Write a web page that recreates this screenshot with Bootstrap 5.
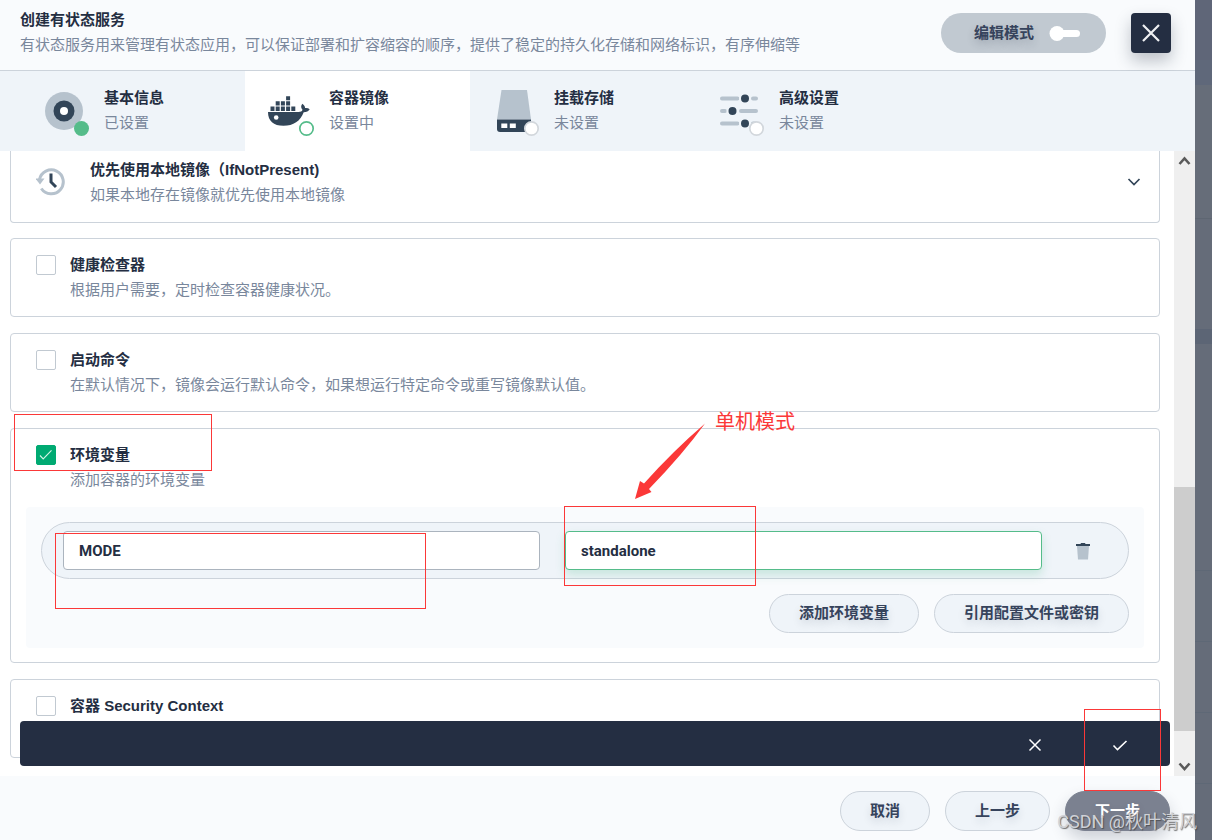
<!DOCTYPE html>
<html lang="zh-CN">
<head>
<meta charset="utf-8">
<meta name="viewport" content="width=device-width, initial-scale=1">
<title>创建有状态服务</title>
<link href="https://cdn.jsdelivr.net/npm/bootstrap@5.3.0/dist/css/bootstrap.min.css" rel="stylesheet">
<style>
:root { --ink:#242e42; --ink2:#36435c; --muted:#79879c; --line:#ccd3db; --pale:#eff4f9; --faint:#f9fbfd; --green:#55bc8a; --mark:#fb3838; }
body { font-family:Roboto,"Noto Sans CJK SC",sans-serif; font-size:15px; line-height:25px; color:var(--ink); background:#656c79; }
.backdrop { padding-right:17px; background:linear-gradient(#5f6678 0 60px,#5f687a 60px 85px,#666d79 85px 218px,#5e6672 218px 219px,#656c79 219px 329px,#5c6575 329px 344px,#656c79 344px 570px,#5e6876 570px 571px,#646c79 571px 641px,#5e6876 641px 642px,#656c79 642px 712px,#5e6876 712px 713px,#656c79 713px 783px,#5e6876 783px 784px,#656c79 784px); }
.drawer { background:#fff; }
.top-bar { background:var(--faint); border-bottom:1px solid var(--line); padding:8px 24px 12px 20px; }
.top-actions { gap:25px; padding-top:5px; }
.fw-title { font-weight:700; }
.panel .fw-title { font-family:"Liberation Sans","Noto Sans CJK SC",sans-serif; }
.desc { color:var(--muted); }
.mode-btn { height:40px; padding:0 26px 0 33px; gap:15px; border:0; border-radius:20px; background:#c1c9d1; color:var(--ink2); font-weight:700; text-shadow:0 4px 8px rgba(36,46,66,.2); }
.close-btn { width:40px; height:40px; border:0; border-radius:4px; background:var(--ink); box-shadow:0 8px 16px rgba(36,46,66,.28); }
.steps { background:var(--pale); padding-left:20px; }
.step-tab { width:225px; height:80px; padding-left:20px; gap:16px; color:inherit; text-decoration:none; }
.step-tab.current { background:#fff; }
.step-icon { width:48px; height:48px; overflow:visible; }
.panel { border:1px solid var(--line); border-radius:4px; background:#fff; padding:13px 15px 14px 25px; }
.panel.cut { border-top:0; border-radius:0 0 4px 4px; padding:6px 17px 15px 25px; }
.panel .desc { padding-top:1px; margin-bottom:-1px; }
.panel-list { padding:0 14px 18px 10px; gap:16px; }
.panel.cut + .panel { margin-top:-1px; }
.tick { appearance:none; width:20px; height:20px; margin:3px 14px 0 0; border:1px solid #c1c9d1; border-radius:2px; background:#fff; flex:none; }
.tick:checked { border-color:#00aa72; background:#00aa72 url("data:image/svg+xml,%3Csvg xmlns='http://www.w3.org/2000/svg' viewBox='0 0 18 18'%3E%3Cpath d='M3 9.5l3.2 3.4L14.5 4.4' fill='none' stroke='%23d4f4e6' stroke-width='1.1'/%3E%3C/svg%3E"); }
.env-area { margin:15px 0 0 -10px; padding:15px; border-radius:4px; background:var(--faint); }
.env-row { padding:8px 0 8px 21px; border:1px solid var(--line); border-radius:29px; background:var(--pale); }
.env-fields { gap:25px; }
.env-actions { gap:15px; margin-top:15px; }
.env-input { width:100%; height:39px; padding:0 15px; border:1px solid #abb4be; border-radius:4px; background:#fff; color:var(--ink); font-weight:700; outline:0; display:block; }
.env-input.active { border-color:var(--green); box-shadow:0 5px 10px rgba(85,188,138,.25); }
.bin { width:86px; border:0; background:none; padding:0 4px 0 0; }
.pill { height:40px; padding:0 29px; border:1px solid var(--line); border-radius:20px; background:var(--pale); color:var(--ink2); font-weight:700; text-shadow:0 4px 8px rgba(36,46,66,.15); }
.env-area .pill { height:39px; }
.pill.next { background:#7b8190; border-color:#7b8190; color:#fff; box-shadow:0 8px 16px rgba(36,46,66,.2); }
.rail { width:21px; background:#efefef; }
.rail-thumb { background:#cdcdcd; height:244px; }
.confirm-bar { left:20px; right:25px; bottom:10px; height:45px; border-radius:4px; background:var(--ink); padding:2px 8px 0 0; z-index:2; }
.confirm-bar > button { width:85px; border:0; background:none; padding:0; }
.bottom-bar { background:var(--faint); padding:15px 25px 9px; gap:15px; }
.mark-box { position:absolute; border:1px solid var(--mark); pointer-events:none; z-index:3; }
.mark-check { left:3px; top:-15px; width:198px; height:57px; }
.mark-key { left:-8px; top:2px; width:371px; height:76px; }
.mark-value { left:-1px; top:-25px; width:192px; height:80px; }
.mark-confirm { right:9px; top:-12px; width:77px; height:82px; }
.mark-arrow { position:absolute; left:70px; top:-108px; z-index:3; }
.mark-note { position:absolute; left:150px; top:-121px; font-size:20px; line-height:24px; color:var(--mark); white-space:nowrap; }
.watermark { position:absolute; right:-2px; bottom:6px; font-size:18px; line-height:25px; color:#cfd1d6; text-shadow:1px 1px 1px rgba(60,60,60,.7); white-space:nowrap; pointer-events:none; z-index:3; }
</style>
</head>
<body>
<div class="backdrop min-vh-100 d-flex">
<div class="drawer flex-grow-1 d-flex flex-column">

<header class="top-bar d-flex align-items-start">
  <div class="flex-grow-1">
    <div class="fw-title">创建有状态服务</div>
    <div class="desc">有状态服务用来管理有状态应用，可以保证部署和扩容缩容的顺序，提供了稳定的持久化存储和网络标识，有序伸缩等</div>
  </div>
  <div class="top-actions d-flex flex-shrink-0">
    <button type="button" class="mode-btn d-flex align-items-center">编辑模式
      <svg width="31" height="16" viewBox="0 0 31 16"><rect x="7" y="5" width="24" height="7" rx="3.5" fill="#fff"/><circle cx="8" cy="8.5" r="7.5" fill="#fff"/></svg>
    </button>
    <button type="button" class="close-btn d-flex align-items-center justify-content-center" aria-label="关闭">
      <svg width="20" height="20" viewBox="0 0 20 20"><path d="M2 2l16 16M18 2L2 18" stroke="#f0f1f3" stroke-width="2.2"/></svg>
    </button>
  </div>
</header>

<nav class="steps d-flex">
  <a href="#" class="step-tab d-flex align-items-center">
    <svg class="step-icon" viewBox="0 0 48 48"><circle cx="24" cy="24" r="19" fill="#b6c2cd"/><circle cx="24" cy="24" r="10.5" fill="#324558"/><circle cx="24" cy="24" r="4" fill="#fff"/><circle cx="41.500" cy="41.500" r="7.500" fill="#55bc8a"/></svg>
    <span><span class="fw-title d-block">基本信息</span><span class="desc d-block">已设置</span></span>
  </a>
  <a href="#" class="step-tab current d-flex align-items-center">
    <svg class="step-icon" viewBox="0 0 48 48"><path fill="#324558" d="M3 25h30.500c2.200 0 3.700-1 4-2.300-1.800-1.700-1.700-4.200-.2-6 1.800 1.200 2.700 2.600 2.800 4.300 1.600-.3 3.300.1 4.600 1.200-1.100 2-3.200 3-6 3-3.200 8.800-10.300 13.600-20.200 13.600C8.500 38.800 3 34 3 25z"/><path fill="#324558" d="M5.500 19.500h4v4.500h-4zM10.700 19.500h4v4.500h-4zM15.900 19.500h4v4.500h-4zM21.100 19.500h4v4.500h-4zM26.300 19.500h4v4.500h-4zM10.700 14.300h4v4.300h-4zM15.900 14.300h4v4.300h-4zM21.100 14.300h4v4.300h-4zM21.100 9.200h4v4h-4z"/><circle cx="11.200" cy="30.500" r="2.300" fill="#fff"/><circle cx="41.500" cy="41.500" r="6.700" fill="#fff" stroke="#55bc8a" stroke-width="1.700"/></svg>
    <span><span class="fw-title d-block">容器镜像</span><span class="desc d-block">设置中</span></span>
  </a>
  <a href="#" class="step-tab d-flex align-items-center">
    <svg class="step-icon" viewBox="0 0 48 48"><path fill="#b6c2cd" d="M11.500 3h25.500l4 29.500H7z"/><path fill="#324558" d="M7 32.500h34V42a3 3 0 0 1-3 3H10a3 3 0 0 1-3-3z"/><path fill="#fff" d="M11.300 36.500h6v4.500h-6zM19.800 36.500h6v4.500h-6z"/><circle cx="41.500" cy="41.500" r="6.700" fill="#fff" stroke="#d2d7dc" stroke-width="1.700"/></svg>
    <span><span class="fw-title d-block">挂载存储</span><span class="desc d-block">未设置</span></span>
  </a>
  <a href="#" class="step-tab d-flex align-items-center">
    <svg class="step-icon" viewBox="0 0 48 48"><path d="M7 11.500h15.500M38 11.500h3M7 24h3M26 24h15M7 36.500h15.500M38 36.500h3" stroke="#b6c2cd" stroke-width="4" stroke-linecap="round"/><g fill="#324558" stroke="#eff4f9" stroke-width="2"><circle cx="30" cy="11.500" r="5"/><circle cx="17.500" cy="24" r="5"/><circle cx="30" cy="36.500" r="5"/></g><circle cx="41.500" cy="41.500" r="6.700" fill="#fff" stroke="#d2d7dc" stroke-width="1.700"/></svg>
    <span><span class="fw-title d-block">高级设置</span><span class="desc d-block">未设置</span></span>
  </a>
</nav>

<main class="d-flex flex-grow-1 position-relative">
  <div class="panel-list flex-grow-1 d-flex flex-column">
    <section class="panel cut d-flex align-items-center">
      <svg width="30" height="30" viewBox="0 0 30 30" class="flex-shrink-0"><path d="M3.500 12.500A12 12 0 1 1 5.300 21.500" fill="none" stroke="#b6c2cd" stroke-width="3"/><path d="M-.5 11.500h9l-4.500 6z" fill="#b6c2cd"/><path d="M15 6.500V15l5 5" fill="none" stroke="#324558" stroke-width="3"/></svg>
      <div class="flex-grow-1 ms-4">
        <div class="fw-title">优先使用本地镜像（IfNotPresent)</div>
        <div class="desc">如果本地存在镜像就优先使用本地镜像</div>
      </div>
      <svg width="16" height="16" viewBox="0 0 16 16"><path d="M2.500 5L8 10.500 13.500 5" fill="none" stroke="#324558" stroke-width="1.700"/></svg>
    </section>

    <section class="panel d-flex">
      <input class="tick" type="checkbox" id="probe">
      <label for="probe"><span class="fw-title d-block">健康检查器</span><span class="desc d-block">根据用户需要，定时检查容器健康状况。</span></label>
    </section>

    <section class="panel d-flex">
      <input class="tick" type="checkbox" id="command">
      <label for="command"><span class="fw-title d-block">启动命令</span><span class="desc d-block">在默认情况下，镜像会运行默认命令，如果想运行特定命令或重写镜像默认值。</span></label>
    </section>

    <section class="panel position-relative">
      <div class="d-flex">
        <input class="tick" type="checkbox" id="env" checked>
        <label for="env"><span class="fw-title d-block">环境变量</span><span class="desc d-block">添加容器的环境变量</span></label>
      </div>
      <div class="mark-box mark-check"></div>
      <div class="env-area">
        <div class="env-row d-flex">
          <div class="env-fields d-flex flex-grow-1">
            <div class="w-50 position-relative">
              <input class="env-input" type="text" value="MODE" aria-label="键">
              <div class="mark-box mark-key"></div>
            </div>
            <div class="w-50 position-relative">
              <input class="env-input active" type="text" value="standalone" aria-label="值">
              <div class="mark-box mark-value"></div>
              <svg class="mark-arrow" width="71" height="77" viewBox="0 0 71 77"><path d="M70 .5Q48 31 14 66l2.500 3L0 76 5 58l4 2.500Q38 28 70 .5z" fill="#fb3838"/></svg>
              <div class="mark-note">单机模式</div>
            </div>
          </div>
          <button type="button" class="bin d-flex align-items-center justify-content-center" aria-label="删除">
            <svg width="16" height="20" viewBox="0 0 16 20"><path d="M2 5h12l-1 13.500H3z" fill="#b6c2cd"/><path d="M1 3h4.500l.5-1h4l.5 1H15v2H1z" fill="#324558"/></svg>
          </button>
        </div>
        <div class="env-actions d-flex justify-content-end">
          <button type="button" class="pill">添加环境变量</button>
          <button type="button" class="pill">引用配置文件或密钥</button>
        </div>
      </div>
    </section>

    <section class="panel d-flex">
      <input class="tick" type="checkbox" id="security">
      <label for="security"><span class="fw-title d-block">容器 Security Context</span><span class="desc d-block">&nbsp;</span></label>
    </section>
  </div>

  <div class="rail d-flex flex-column align-items-center">
    <svg width="21" height="20" viewBox="0 0 21 20"><path d="M5.500 13L10.500 7.500l5 5.500" fill="none" stroke="#5a5a5a" stroke-width="2.600"/></svg>
    <div class="rail-thumb w-100 mt-auto"></div>
    <svg width="21" height="45" viewBox="0 0 21 45"><path d="M5.500 32.500l5 5.500 5-5.500" fill="none" stroke="#5a5a5a" stroke-width="2.600"/></svg>
  </div>

  <div class="confirm-bar position-absolute d-flex justify-content-end">
    <button type="button" aria-label="取消编辑"><svg width="16" height="16" viewBox="0 0 16 16"><path d="M2.500 2.500l11 11M13.500 2.500l-11 11" stroke="#fff" stroke-width="1.500"/></svg></button>
    <button type="button" aria-label="确认"><svg width="16" height="16" viewBox="0 0 16 16"><path d="M1.500 8.500l4 4.200L14.500 4" fill="none" stroke="#fff" stroke-width="1.600"/></svg></button>
    <div class="mark-box mark-confirm"></div>
  </div>
</main>

<footer class="bottom-bar d-flex justify-content-end position-relative">
  <button type="button" class="pill">取消</button>
  <button type="button" class="pill">上一步</button>
  <button type="button" class="pill next">下一步</button>
  <div class="watermark">CSDN @秋叶清风</div>
</footer>

</div>
</div>
<script src="https://cdn.jsdelivr.net/npm/bootstrap@5.3.0/dist/js/bootstrap.bundle.min.js"></script>
</body>
</html>
